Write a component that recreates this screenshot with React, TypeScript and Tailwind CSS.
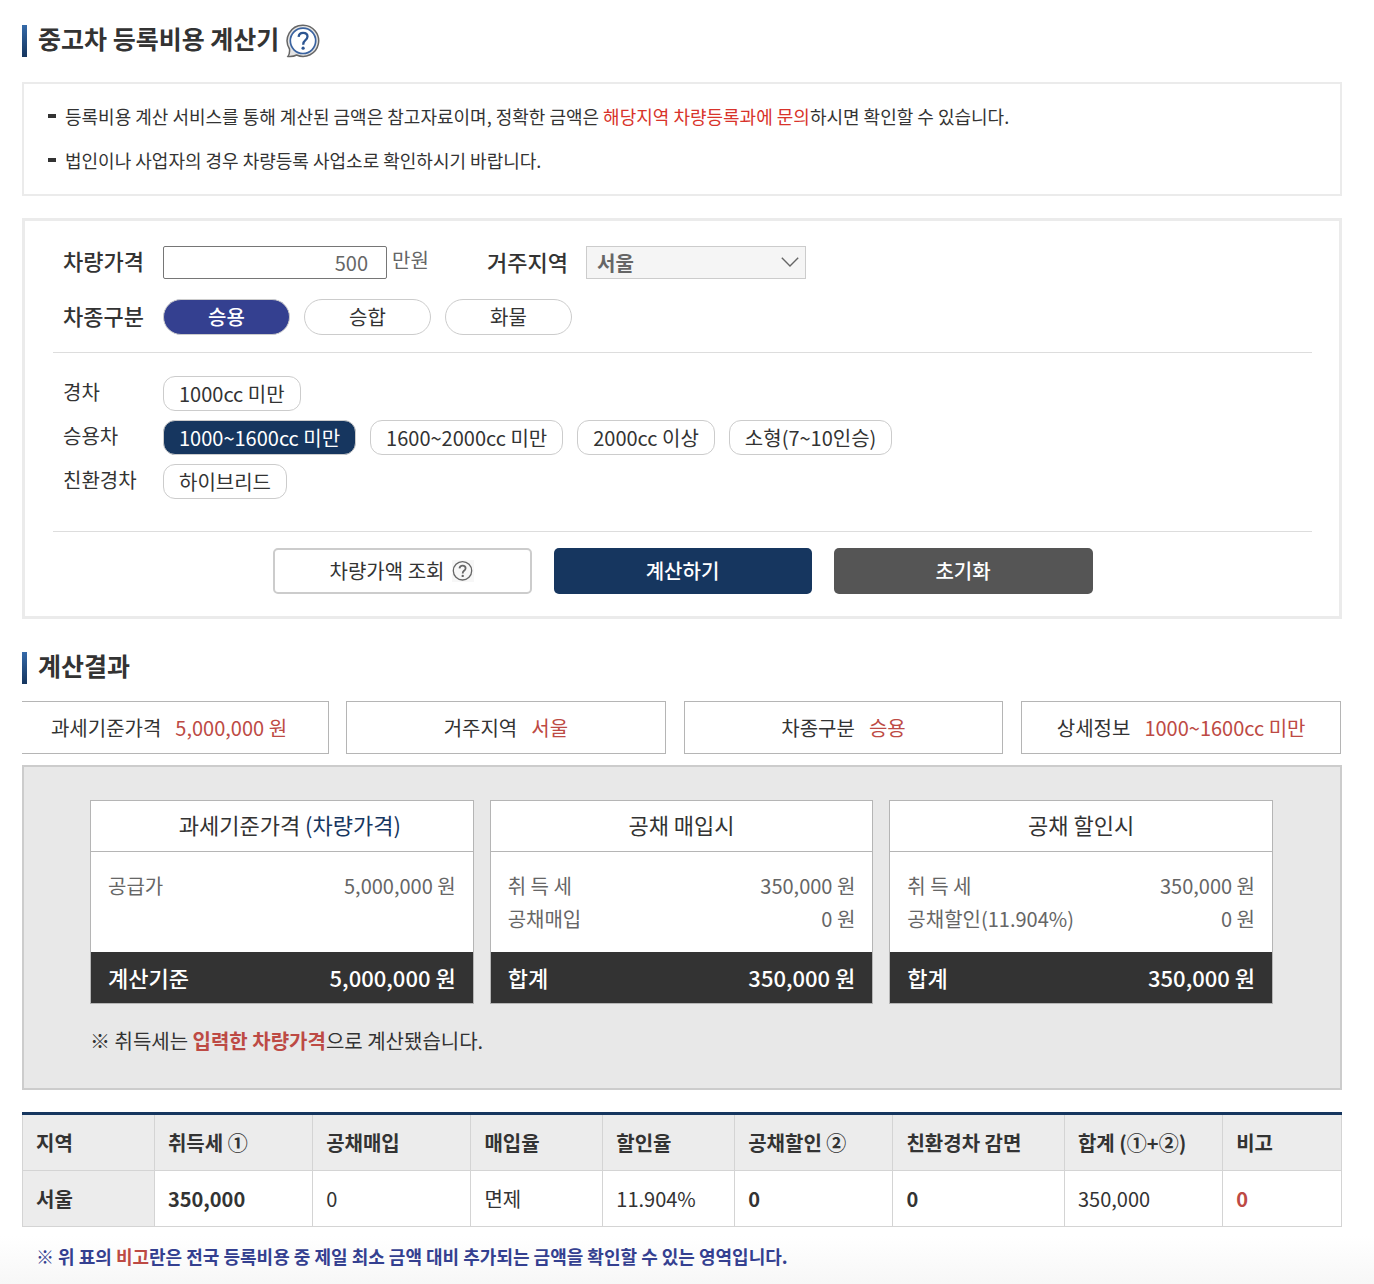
import React, { useState } from "react";

const vehicleTypes = ["승용", "승합", "화물"];

const classGroups = [
  { label: "경차", options: ["1000cc 미만"] },
  {
    label: "승용차",
    options: ["1000~1600cc 미만", "1600~2000cc 미만", "2000cc 이상", "소형(7~10인승)"],
  },
  { label: "친환경차", options: ["하이브리드"] },
];

function SectionTitle({ children }: { children: React.ReactNode }) {
  return (
    <div className="flex items-center gap-[11px]">
      <span className="h-8 w-[5px] bg-linear-to-b from-[#356aa9] to-[#16365f]" />
      <h2 className="-mt-1.5 text-[25px] leading-8 font-bold">{children}</h2>
    </div>
  );
}

function BubbleHelpIcon() {
  return (
    <svg className="size-[34px]" viewBox="0 0 34 34" fill="none" aria-hidden="true">
      <path
        d="M17 1.2a15.6 15.6 0 1 1-6.4 29.8c-2.400 1.300-5.400 1.700-8.600 1.400 1.400-1.900 1.900-3.800 1.500-7.400A15.600 15.600 0 0 1 17 1.200z"
        fill="#e4e4e4"
        stroke="#666"
        strokeWidth="1.5"
      />
      <circle cx="17" cy="16.800" r="12.700" fill="#fff" stroke="#3a63a0" strokeWidth="1.700" />
      <path
        d="M12.600 12.800c.3-2.600 2-4 4.500-4s4.400 1.500 4.400 3.800c0 1.800-1 2.800-2.300 3.800-1.300 1-2 2-2 4.300"
        stroke="#2c5591"
        strokeWidth="2.300"
      />
      <circle cx="17.100" cy="24.200" r="1.600" fill="#2c5591" />
    </svg>
  );
}

function SmallHelpIcon() {
  return (
    <svg className="size-[22px] bg-[#f7f7f7]" viewBox="0 0 22 22" fill="none" aria-hidden="true">
      <circle cx="10.500" cy="10.800" r="9.200" stroke="#666" strokeWidth="1.300" />
      <path
        d="M7.500 8.400c.2-1.900 1.400-2.800 3.100-2.800s3 1 3 2.600c0 1.300-.7 1.900-1.600 2.600-.9.700-1.300 1.300-1.300 2.700"
        stroke="#666"
        strokeWidth="1.800"
      />
      <circle cx="10.700" cy="15.900" r="1.200" fill="#666" />
    </svg>
  );
}

function SummaryBox({ label, value, first }: { label: string; value: string; first?: boolean }) {
  return (
    <div
      className={
        "flex h-[53px] flex-1 items-center justify-center gap-3.5 border border-[#b5b5b5] bg-white text-xl " +
        (first ? "-mr-px max-w-[307px] border-l-0 pr-3" : "")
      }
    >
      <span>{label}</span>
      <span className="text-[#bd4a44]">{value}</span>
    </div>
  );
}

type Row = [string, string];

function CostCard({ title, rows, total }: { title: React.ReactNode; rows: Row[]; total: Row }) {
  return (
    <section className="flex flex-1 flex-col border border-[#b5b5b5] bg-white">
      <h3 className="border-b border-[#b5b5b5] pt-2 pb-3 text-center text-[22px] leading-[30px]">{title}</h3>
      <dl className="min-h-[100px] flex-1 px-[17px] pt-[17px] text-xl leading-[33px] text-[#666]">
        {rows.map(([k, v]) => (
          <div key={k} className="flex justify-between">
            <dt>{k}</dt>
            <dd>{v}</dd>
          </div>
        ))}
      </dl>
      <div className="flex justify-between bg-[#333] px-[17px] py-2.5 text-[22px] leading-[31px] font-medium text-white">
        <span>{total[0]}</span>
        <span>{total[1]}</span>
      </div>
    </section>
  );
}

const columns = [
  { name: "지역", width: "w-[10%]" },
  { name: "취득세 ①", width: "w-[12%]" },
  { name: "공채매입", width: "w-[12%]" },
  { name: "매입율", width: "w-[10%]" },
  { name: "할인율", width: "w-[10%]" },
  { name: "공채할인 ②", width: "w-[12%]" },
  { name: "친환경차 감면", width: "w-[13%]" },
  { name: "합계 (①+②)", width: "w-[12%]" },
  { name: "비고", width: "w-[9%]" },
];

const cells = [
  { text: "350,000", style: "font-bold" },
  { text: "0", style: "" },
  { text: "면제", style: "" },
  { text: "11.904%", style: "" },
  { text: "0", style: "font-bold" },
  { text: "0", style: "font-bold" },
  { text: "350,000", style: "" },
  { text: "0", style: "font-bold text-[#bd4a44]" },
];

export default function App() {
  const [price, setPrice] = useState("500");
  const [type, setType] = useState("승용");
  const [engine, setEngine] = useState("1000~1600cc 미만");

  return (
    <main className="min-h-screen bg-white bg-linear-to-t from-[#f7f7f7] to-white to-[48px] pt-[25px] pr-8 pb-3 pl-[22px] font-['Noto_Sans_CJK_KR',sans-serif] text-[#333]">
      <div className="flex items-center gap-[7px]">
        <SectionTitle>중고차 등록비용 계산기</SectionTitle>
        <button type="button" aria-label="도움말" className="-my-1">
          <BubbleHelpIcon />
        </button>
      </div>

      <ul className="mt-[25px] border-2 border-[#ebebeb] px-6 pt-2.5 pb-3 text-[18px] leading-[44px]">
        <li className="flex items-center gap-[9px]">
          <span className="h-1 w-2 bg-[#333]" />
          <p>
            등록비용 계산 서비스를 통해 계산된 금액은 참고자료이며, 정확한 금액은{" "}
            <span className="text-[#d8332b]">해당지역 차량등록과에 문의</span>하시면 확인할 수 있습니다.
          </p>
        </li>
        <li className="flex items-center gap-[9px]">
          <span className="h-1 w-2 bg-[#333]" />
          <p>법인이나 사업자의 경우 차량등록 사업소로 확인하시기 바랍니다.</p>
        </li>
      </ul>

      <form
        className="mt-[22px] border-[3px] border-[#ebebeb] pt-[25px] pr-[27px] pb-[22px] pl-7 text-xl"
        onSubmit={(e) => e.preventDefault()}
      >
        <div className="flex h-[33px] items-center pl-2.5">
          <label htmlFor="price" className="w-[100px] pb-1 text-[22px] font-medium">
            차량가격
          </label>
          <input
            id="price"
            value={price}
            onChange={(e) => setPrice(e.target.value)}
            className="h-[33px] w-56 rounded-xs border border-[#767676] bg-white pr-[18px] text-right text-[#666]"
          />
          <span className="ml-[5px] w-[95px] pb-1.5 text-[#666]">만원</span>
          <label htmlFor="region" className="w-[99px] pb-0.5 text-[22px] font-medium">
            거주지역
          </label>
          <div className="relative">
            <select
              id="region"
              defaultValue="서울"
              className="h-[33px] w-[220px] appearance-none border border-[#ccc] bg-[#f5f5f5] pl-2.5 leading-none font-bold text-[#666]"
            >
              <option>서울</option>
            </select>
            <svg
              className="pointer-events-none absolute top-[11px] right-[7px] h-2.5 w-[18px]"
              viewBox="0 0 18 10"
              fill="none"
              stroke="#666"
              strokeWidth="1.400"
              aria-hidden="true"
            >
              <path d="M.8.8 9 9 17.200.8" />
            </svg>
          </div>
        </div>

        <div className="mt-5 flex items-start border-b border-[#ddd] pb-[17px] pl-2.5">
          <span className="w-[100px] text-[22px] leading-8 font-medium">차종구분</span>
          <div className="flex gap-3.5">
            {vehicleTypes.map((t) => (
              <button
                key={t}
                type="button"
                aria-pressed={t === type}
                onClick={() => setType(t)}
                className={
                  "h-9 w-[127px] rounded-full border border-[#ccc] " +
                  (t === type ? "bg-[#344090] font-medium text-white" : "bg-white")
                }
              >
                {t}
              </button>
            ))}
          </div>
        </div>

        <div className="flex flex-col gap-[9px] border-b border-[#ddd] pt-[23px] pb-8 pl-2.5">
          {classGroups.map((g) => (
            <div key={g.label} className="flex">
              <span className="w-[100px] leading-8">{g.label}</span>
              <div className="flex flex-wrap gap-3.5">
                {g.options.map((o) => (
                  <button
                    key={o}
                    type="button"
                    aria-pressed={o === engine}
                    onClick={() => setEngine(o)}
                    className={
                      "rounded-xl border border-[#ccc] px-[15px] leading-[33px] " +
                      (o === engine ? "bg-[#16365f] text-white" : "bg-white")
                    }
                  >
                    {o}
                  </button>
                ))}
              </div>
            </div>
          ))}
        </div>

        <div className="mt-4 flex justify-center gap-[22px]">
          <button
            type="button"
            className="flex h-[46px] w-[259px] items-center justify-center gap-2 rounded-[5px] border-2 border-[#ccc] bg-white"
          >
            차량가액 조회 <SmallHelpIcon />
          </button>
          <button type="submit" className="h-[46px] w-[258px] rounded-[5px] bg-[#16365f] font-medium text-white">
            계산하기
          </button>
          <button type="reset" className="h-[46px] w-[259px] rounded-[5px] bg-[#555] font-medium text-white">
            초기화
          </button>
        </div>
      </form>

      <div className="mt-[33px]">
        <SectionTitle>계산결과</SectionTitle>
      </div>

      <div className="mt-[17px] mr-px flex gap-[18px]">
        <SummaryBox first label="과세기준가격" value="5,000,000 원" />
        <SummaryBox label="거주지역" value="서울" />
        <SummaryBox label="차종구분" value="승용" />
        <SummaryBox label="상세정보" value="1000~1600cc 미만" />
      </div>

      <div className="mt-[11px] border-2 border-[#ccc] bg-[#e8e8e8] pt-[33px] pr-[67px] pb-8 pl-[66px]">
        <div className="flex gap-4">
          <CostCard
            title={
              <span className="pl-4">
                과세기준가격 <span className="text-[#16365f]">(차량가격)</span>
              </span>
            }
            rows={[["공급가", "5,000,000 원"]]}
            total={["계산기준", "5,000,000 원"]}
          />
          <CostCard
            title="공채 매입시"
            rows={[
              ["취 득 세", "350,000 원"],
              ["공채매입", "0 원"],
            ]}
            total={["합계", "350,000 원"]}
          />
          <CostCard
            title="공채 할인시"
            rows={[
              ["취 득 세", "350,000 원"],
              ["공채할인(11.904%)", "0 원"],
            ]}
            total={["합계", "350,000 원"]}
          />
        </div>
        <p className="mt-[22px] text-xl leading-[30px]">
          ※ 취득세는 <strong className="text-[#bd4a44]">입력한 차량가격</strong>으로 계산됐습니다.
        </p>
      </div>

      <table className="mt-[22px] w-full table-fixed border-collapse border-t-[3px] border-t-[#16365f] text-left text-xl">
        <thead>
          <tr className="h-[57px] bg-[#ececec]">
            {columns.map((c) => (
              <th key={c.name} scope="col" className={"border-x border-b border-[#d4d4d4] pl-[13px] font-bold " + c.width}>
                {c.name}
              </th>
            ))}
          </tr>
        </thead>
        <tbody>
          <tr className="h-14">
            <th scope="row" className="border border-[#d4d4d4] bg-[#ececec] pl-[13px] font-bold">
              서울
            </th>
            {cells.map((c, i) => (
              <td key={i} className={"border border-[#d4d4d4] bg-white pl-[13px] " + c.style}>
                {c.text}
              </td>
            ))}
          </tr>
        </tbody>
      </table>

      <p className="mt-[15px] pl-3.5 text-[18px] leading-7 font-bold text-[#344090]">
        ※ 위 표의 <span className="text-[#bd4a44]">비고</span>란은 전국 등록비용 중 제일 최소 금액 대비 추가되는 금액을 확인할 수 있는
        영역입니다.
      </p>
    </main>
  );
}
